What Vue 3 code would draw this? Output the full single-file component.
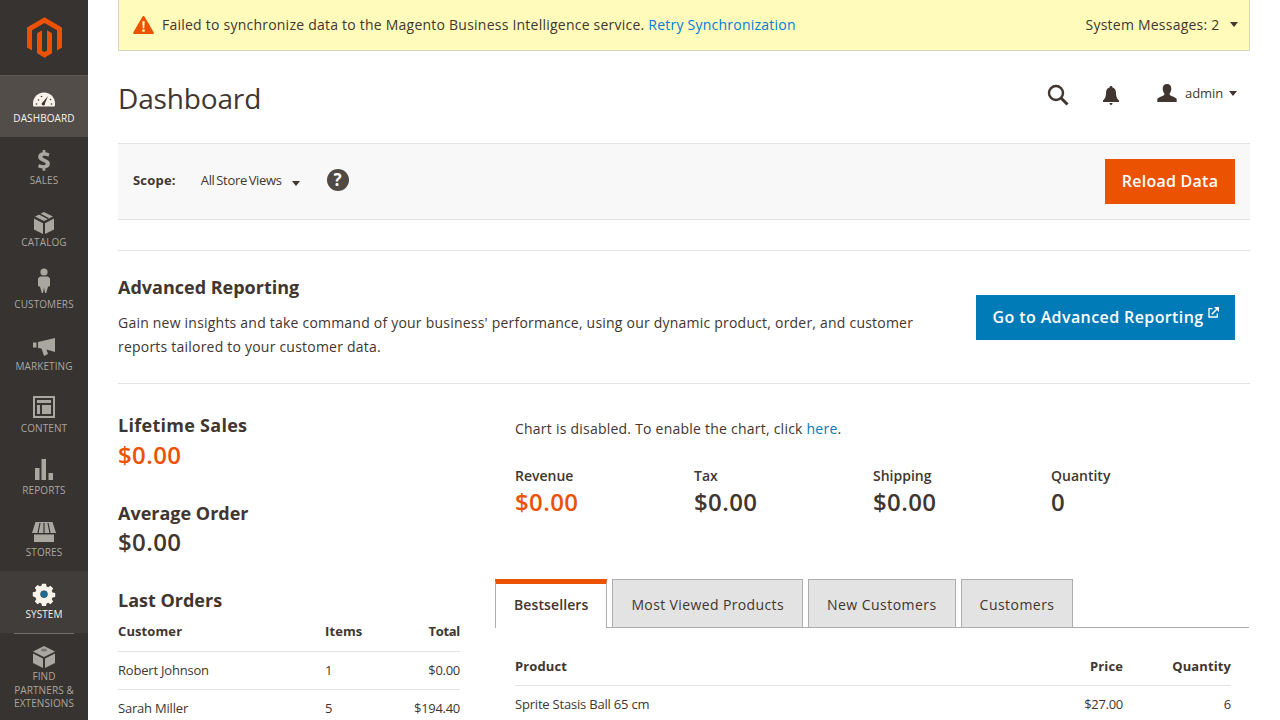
<template>
  <div class="page">
    <nav class="sidebar">
      <div class="logo">
        <svg width="35" height="41" viewBox="1.6 0 20.800 24">
          <path fill="#eb5202" d="M12 24l-4.455-2.572v-12l2.970-1.715v12.001l1.485.902 1.485-.902V7.713l2.971 1.715v12L12 24zM22.391 6v12l-2.969 1.714V7.713L12 3.430 4.574 7.713v12.001L1.609 18V6L12 0l10.391 6z" />
        </svg>
      </div>
      <a v-for="item in menu" :key="item.label" class="menu-item" :class="item.cls">
        <svg class="menu-icon" width="28" height="26" viewBox="0 0 28 26" v-html="item.icon"></svg>
        <span class="menu-label">{{ item.label }}</span>
      </a>
    </nav>

    <main class="content">
      <div class="message">
        <svg class="warn" width="21" height="18" viewBox="0 0 22 19">
          <path fill="#eb5202" d="M11 0c.5 0 .9.300 1.200.800l9.500 16.400c.5.900 0 1.800-1 1.800H1.300c-1 0-1.500-.9-1-1.800L9.800.800C10.100.300 10.500 0 11 0z" />
          <path fill="#fffcbb" d="M9.700 5.500h2.600l-.5 7.500h-1.600zM9.700 14.300h2.600v2.400H9.700z" />
        </svg>
        <span class="message-text">Failed to synchronize data to the Magento Business Intelligence service. <a class="link">Retry Synchronization</a></span>
        <span class="message-count">System Messages: 2<i class="caret caret-msg"></i></span>
      </div>

      <header class="page-head">
        <h1>Dashboard</h1>
        <div class="head-actions">
          <svg class="search" width="22" height="22" viewBox="0 0 22 22" fill="none" stroke="#41362f">
            <circle cx="9" cy="9" r="7" stroke-width="2.400" />
            <path d="M14 14l6.500 6.500" stroke-width="3" />
          </svg>
          <svg class="bell" width="16" height="19" viewBox="0 0 16 19">
            <path fill="#41362f" d="M8 0c1 0 1.500.6 1.500 1.500C12 2.200 13 4.300 13 7c0 3.500.8 5.500 3 7.500V16H0v-1.500C2.200 12.500 3 10.500 3 7c0-2.700 1-4.800 3.500-5.500C6.500.6 7 0 8 0zM6.500 17h3c0 1-.6 2-1.500 2s-1.500-1-1.500-2z" />
          </svg>
          <div class="user">
            <svg width="20" height="20" viewBox="0 0 20 20">
              <path fill="#41362f" d="M10 0c2.800 0 4.300 2 4.300 4.800 0 2-.8 3.800-1.800 5 0 1 .5 1.500 2 2.100 2.800 1 4.700 1.800 5.200 3.100V18H.3v-3C.8 13.700 2.700 12.900 5.500 11.900c1.500-.6 2-1.100 2-2.100-1-1.200-1.800-3-1.800-5C5.700 2 7.200 0 10 0z" />
            </svg>
            <span class="user-name">admin</span>
            <i class="caret caret-user"></i>
          </div>
        </div>
      </header>

      <section class="scope-bar">
        <span class="scope-label">Scope:</span>
        <span class="scope-value">All Store Views<i class="caret caret-scope"></i></span>
        <span class="help">?</span>
        <button class="btn btn-reload">Reload Data</button>
      </section>

      <section class="reporting">
        <div class="reporting-text">
          <h2>Advanced Reporting</h2>
          <p>Gain new insights and take command of your business' performance, using our dynamic product, order, and customer reports tailored to your customer data.</p>
        </div>
        <button class="btn btn-report">
          Go to Advanced Reporting
          <svg class="ext" width="11" height="11" viewBox="0 0 11 11" fill="none" stroke="#fff" stroke-width="1.300">
            <path d="M4.500 1.700H1v8.300h8.300V6.500" />
            <path d="M3.800 7.200 9.500 1.500" stroke-width="1.600" />
            <path fill="#fff" stroke="none" d="M6 0h5v5z" />
          </svg>
        </button>
      </section>

      <section class="columns">
        <aside class="left-col">
          <h2 class="first-title">Lifetime Sales</h2>
          <div class="amount accent">$0.00</div>
          <h2 class="stat-title">Average Order</h2>
          <div class="amount">$0.00</div>
          <h2 class="stat-title">Last Orders</h2>
          <table class="orders">
            <thead>
              <tr>
                <th>Customer</th>
                <th class="col-items">Items</th>
                <th class="num">Total</th>
              </tr>
            </thead>
            <tbody>
              <tr v-for="o in orders" :key="o.name">
                <td>{{ o.name }}</td>
                <td class="col-items">{{ o.items }}</td>
                <td class="num">{{ o.total }}</td>
              </tr>
            </tbody>
          </table>
        </aside>

        <div class="right-col">
          <div class="chart-area">
            <p class="chart-note">Chart is disabled. To enable the chart, click <a class="link-here">here</a>.</p>
            <ul class="totals">
              <li v-for="(t, i) in totals" :key="t.label">
                <span class="total-label">{{ t.label }}</span>
                <strong class="amount" :class="{ accent: i === 0 }">{{ t.value }}</strong>
              </li>
            </ul>
          </div>

          <div class="tabs">
            <a v-for="(tab, i) in tabs" :key="tab" class="tab" :class="{ active: i === 0 }">{{ tab }}</a>
          </div>
          <table class="products">
            <thead>
              <tr>
                <th>Product</th>
                <th class="num">Price</th>
                <th class="num col-qty">Quantity</th>
              </tr>
            </thead>
            <tbody>
              <tr>
                <td>Sprite Stasis Ball 65 cm</td>
                <td class="num">$27.00</td>
                <td class="num">6</td>
              </tr>
            </tbody>
          </table>
        </div>
      </section>
    </main>
  </div>
</template>

<script setup>
const menu = [
  {
    label: 'DASHBOARD',
    cls: 'active',
    icon: '<g transform="translate(0 1.500)"><path fill="#f7f3eb" d="M14 4C7.500 4 3 9 3 15c0 1.300.1 2 .4 3h21.200c.3-1 .4-1.700.4-3 0-6-4.500-11-11-11z"/><path fill="#41362f" d="M18 7.500 15 14.700a1.700 1.700 0 1 1-2.300-1z"/><circle cx="8.500" cy="11.500" r=".8" fill="#41362f"/><circle cx="11.500" cy="8" r=".8" fill="#41362f"/><circle cx="6.500" cy="15.500" r=".8" fill="#41362f"/><circle cx="21.500" cy="15.500" r=".8" fill="#41362f"/><circle cx="20.500" cy="11" r=".8" fill="#41362f"/></g>',
  },
  {
    label: 'SALES',
    icon: '<path fill="#aaa6a0" d="M12.500 0h3v2.600c2 .2 3.500.7 4.500 1.300l-1 3.500c-1.200-.6-3-1.100-4.600-1.100-1.500 0-2.200.5-2.200 1.300 0 .9 1 1.400 3.400 2.300 3.500 1.200 5 2.800 5 5.300 0 2.500-1.800 4.600-5.100 5.100V23h-3v-2.500c-2-.1-4-.7-5.100-1.400l1-3.500c1.300.7 3.100 1.300 5 1.300 1.600 0 2.500-.6 2.500-1.600 0-.9-.9-1.500-3.100-2.300-3.200-1.100-5.300-2.600-5.300-5.400 0-2.500 1.800-4.400 5-5z" transform="translate(1.400 1) scale(.9)"/>',
  },
  {
    label: 'CATALOG',
    icon: '<path fill="#aaa6a0" d="M14 1 23 5.500 14 10 5 5.500zM4 7.500l9 4.700V23l-9-4.500zM24 7.500V18.500L15 23V12.200z"/><path fill="#373330" d="M8.500 3.200 17.500 8l1.700-.8L10.200 2.400z"/>',
  },
  {
    label: 'CUSTOMERS',
    icon: '<g transform="translate(0 -5)"><circle cx="14" cy="4" r="3.600" fill="#aaa6a0"/><path fill="#aaa6a0" d="M10 8.500h8l2 2v7.500l-2 .8-1.800 6.200h-1.200l-1-5.500-1 5.500h-1.200L10 18.800 8 18v-7.500z"/></g>',
  },
  {
    label: 'MARKETING',
    icon: '<path fill="#aaa6a0" d="M3 7.500h3.500v5H3zM8 7 25 3v14l-8.500-2.500 1.500 4.500-4 2-2.500-7.500L8 13z"/>',
  },
  {
    label: 'CONTENT',
    icon: '<g transform="translate(0 -2)"><path fill="#aaa6a0" fill-rule="evenodd" d="M3 1h22v22H3zm2 2v18h18V3z"/><path fill="#aaa6a0" d="M7 5h14v3H7zM7 10h3v9H7zM12 10h9v9h-9z"/></g>',
  },
  {
    label: 'REPORTS',
    icon: '<path fill="#aaa6a0" d="M5 9h4.500v12H5zM11.500 0H16v21h-4.500zM18.500 14H23v7h-4.500z"/>',
  },
  {
    label: 'STORES',
    icon: '<path fill="#aaa6a0" d="M5.500 1h17L26 12H2zM4 13.500h20V21H4z"/><path stroke="#373330" stroke-width="1.200" fill="none" d="M10 2 8 12M14 2v10M18 2l2 10"/>',
  },
  {
    label: 'SYSTEM',
    cls: 'active-dim',
    icon: '<path fill="#f7f3eb" fill-rule="evenodd" d="M11.500 1h5l.7 3.300 2 .9 2.900-1.800 3.400 3.500-1.800 2.800.9 2.100 3.400.7v5l-3.400.6-.9 2.100 1.800 2.900-3.400 3.400-2.900-1.800-2 .9-.7 3.300h-5l-.7-3.300-2-.9-2.900 1.800-3.400-3.400 1.800-2.900-.9-2.100L0 16.500v-5l3.400-.7.9-2.100-1.800-2.800 3.400-3.500 2.900 1.800 2-.9zM14 9.500a4.500 4.500 0 1 0 0 9 4.500 4.500 0 0 0 0-9z" transform="translate(2.800 0) scale(.8)"/><circle cx="14" cy="11.200" r="3.400" fill="#1e6b93"/>',
  },
  {
    label: 'FIND PARTNERS & EXTENSIONS',
    cls: 'partners',
    icon: '<path fill="#aaa6a0" d="M14 1 25 6.500 14 12 3 6.500zM3 8.500 13 13.500V23L3 18zM25 8.500V18L15 23V13.500z"/><ellipse cx="14" cy="5" rx="3" ry="1.500" fill="#7b7772"/>',
  },
]

const orders = [
  { name: 'Robert Johnson', items: 1, total: '$0.00' },
  { name: 'Sarah Miller', items: 5, total: '$194.40' },
]

const totals = [
  { label: 'Revenue', value: '$0.00' },
  { label: 'Tax', value: '$0.00' },
  { label: 'Shipping', value: '$0.00' },
  { label: 'Quantity', value: '0' },
]

const tabs = ['Bestsellers', 'Most Viewed Products', 'New Customers', 'Customers']
</script>

<style>
html,
body {
  margin: 0;
  overflow: hidden;
}
</style>

<style scoped>
.page {
  display: flex;
  height: 720px;
  overflow: hidden;
  font-family: "Open Sans", sans-serif;
  font-size: 14px;
  letter-spacing: 0.23px;
  color: #41362f;
  background: #fff;
}

/* sidebar */
.sidebar {
  flex: 0 0 88px;
  background: #373330;
  display: flex;
  flex-direction: column;
  align-items: stretch;
}

.logo {
  height: 75px;
  display: flex;
  justify-content: center;
  padding-top: 17px;
  box-sizing: border-box;
}

.menu-item {
  height: 62px;
  display: flex;
  flex-direction: column;
  align-items: center;
  padding-top: 12px;
  box-sizing: border-box;
  color: #aaa6a0;
  font-size: 10px;
  line-height: 13px;
  letter-spacing: 0.1px;
  text-align: center;
}

.menu-icon {
  display: block;
  margin-bottom: -1px;
  overflow: visible;
}

.menu-item.active {
  background: #524d49;
  color: #f7f3eb;
  border-top: 1px solid #5b5753;
  padding-top: 11px;
}

.menu-item.active-dim {
  background: #413d3a;
  color: #f7f3eb;
}

.menu-item.partners {
  position: relative;
  height: auto;
  padding: 12px 8px 0;
  line-height: 13.500px;
}

.partners::before {
  content: "";
  position: absolute;
  top: 0;
  left: 14px;
  right: 14px;
  height: 1px;
  background: #736e69;
}

/* main area */
.content {
  flex: 1;
  min-width: 0;
  padding: 0 30px;
}

.message {
  height: 51px;
  box-sizing: border-box;
  background: #fffcbb;
  border: 1px solid #d6d6c0;
  border-top: 0;
  display: flex;
  align-items: center;
  padding: 0 11px 1px 14px;
  color: #41362f;
}

.warn {
  flex: none;
  margin-right: 8px;
}

.message-text {
  flex: 1;
}

.link {
  color: #007bdb;
}

.message-count {
  display: flex;
  align-items: center;
}

.caret {
  display: inline-block;
  width: 0;
  height: 0;
  border-left: 4.500px solid transparent;
  border-right: 4.500px solid transparent;
  border-top: 5px solid #41362f;
}

.caret-msg {
  margin-left: 10.500px;
}

.page-head {
  height: 92px;
  display: flex;
  justify-content: space-between;
  align-items: flex-start;
}

h1 {
  margin: 27px 0 0;
  font-size: 28px;
  font-weight: 400;
  line-height: 40px;
  letter-spacing: -0.15px;
}

.head-actions {
  display: flex;
  align-items: center;
  margin-top: 33px;
  padding-right: 13px;
}

.search {
  margin-right: 34px;
}

.bell {
  margin-right: 38px;
}

.user {
  display: flex;
  align-items: center;
  font-size: 13px;
  letter-spacing: -0.1px;
}

.user svg {
  margin-top: -3px;
}

.user-name {
  margin: 0 6px 4px 8px;
}

.caret-user {
  margin-bottom: 3px;
}

.scope-bar {
  height: 77px;
  box-sizing: border-box;
  background: #f8f8f8;
  border-top: 1px solid #e3e3e3;
  border-bottom: 1px solid #e3e3e3;
  display: flex;
  align-items: center;
  padding: 0 15px;
}

.scope-label {
  font-weight: 700;
  margin-right: 25px;
  margin-top: -3px;
  font-size: 13px;
  letter-spacing: 0.2px;
}

.scope-value {
  font-size: 13px;
  letter-spacing: -0.3px;
  word-spacing: -1.400px;
  margin-top: -3px;
}

.caret-scope {
  margin-left: 10px;
  vertical-align: -1px;
}

.help {
  width: 22px;
  height: 22px;
  border-radius: 50%;
  background: #514943;
  color: #fff;
  font-weight: 700;
  font-size: 17px;
  line-height: 22px;
  text-align: center;
  margin-left: 27px;
  margin-top: -3px;
}

.btn {
  border: 0;
  color: #fff;
  font-family: inherit;
  font-size: 16px;
  font-weight: 600;
  letter-spacing: 0.4px;
  height: 45px;
  padding: 0 0 2px;
  white-space: nowrap;
}

.btn-reload {
  margin-left: auto;
  width: 130px;
  background: #eb5202;
  letter-spacing: 0.25px;
}

.reporting {
  margin-top: 30px;
  height: 134px;
  box-sizing: border-box;
  border-top: 1px solid #e3e3e3;
  border-bottom: 1px solid #e3e3e3;
  display: flex;
  justify-content: space-between;
  align-items: flex-start;
  padding-right: 15px;
}

h2 {
  margin: 0;
  font-size: 18px;
  font-weight: 700;
  line-height: 26px;
  letter-spacing: 0;
}

.first-title {
  letter-spacing: 0.28px;
}

.reporting-text {
  width: 820px;
  padding-top: 23px;
}

.reporting-text p {
  margin: 11px 0 0;
  line-height: 24px;
  letter-spacing: 0.215px;
}

.btn-report {
  margin-top: 44px;
  width: 259px;
  background: #007bb7;
  display: flex;
  align-items: center;
  justify-content: center;
  gap: 4px;
}

.ext {
  margin-top: -9px;
}

.columns {
  display: flex;
}

.left-col {
  flex: 0 0 342px;
  padding-top: 28px;
}

.amount {
  display: block;
  font-size: 24px;
  font-weight: 600;
  line-height: 33px;
  margin-top: 0;
  letter-spacing: 0.4px;
}

.accent {
  color: #eb5202;
}

.stat-title {
  margin-top: 29px;
  margin-bottom: -1px;
}

table {
  border-collapse: collapse;
  width: 100%;
  font-size: 13px;
  letter-spacing: -0.2px;
}

th {
  font-size: 13px;
  font-weight: 700;
  text-align: left;
  padding: 0;
  letter-spacing: 0.1px;
}

td {
  padding: 0;
  border-top: 1px solid #e3e3e3;
}

.orders {
  margin-top: 4px;
}

.orders th {
  height: 35px;
  padding-bottom: 4px;
  box-sizing: border-box;
}

.orders td {
  height: 38px;
  box-sizing: border-box;
}

.orders .col-items {
  width: 72px;
}

.orders th:last-child,
.orders td:last-child {
  width: 63px;
}

.num {
  text-align: right;
  letter-spacing: -0.3px;
}

.right-col {
  flex: 1;
  min-width: 0;
  margin-left: 35px;
}

.chart-area {
  padding: 33px 0 0 20px;
}

.chart-note {
  margin: 0;
  line-height: 24px;
}

.link-here {
  color: #007bb7;
}

.totals {
  list-style: none;
  margin: 25px 0 0;
  padding: 0;
  display: grid;
  grid-template-columns: 179px 179px 178px 1fr;
}

.totals li {
  display: flex;
  flex-direction: column;
}

.total-label {
  font-weight: 600;
  line-height: 19px;
  letter-spacing: 0;
}

.totals .amount {
  line-height: 33px;
  margin-top: 0;
}

.tabs {
  display: flex;
  gap: 5px;
  margin-top: 61px;
  height: 49px;
  border-bottom: 1px solid #adadad;
  box-sizing: border-box;
  margin-right: 1px;
}

.tab {
  box-sizing: border-box;
  height: 49px;
  padding: 0 18px;
  line-height: 49px;
  background: #e3e3e3;
  border: 1px solid #adadad;
  letter-spacing: 0.38px;
  color: #41362f;
}

.tab:nth-child(n + 3) {
  letter-spacing: 0.46px;
}

.tab.active {
  height: 49px;
  background: #fff;
  border-color: #adadad;
  border-top: 5px solid #eb5202;
  border-bottom: 0;
  line-height: 41px;
  letter-spacing: 0.1px;
  font-weight: 600;
  margin-right: 0;
}

.products {
  margin: 0 19px 0 20px;
  width: calc(100% - 39px);
}

.products th {
  height: 57px;
  padding-top: 19px;
  box-sizing: border-box;
  text-align: left;
}

.products th.num {
  text-align: right;
  letter-spacing: 0.1px;
}

.products td {
  height: 37px;
}

.products .col-qty {
  width: 108px;
}
</style>
